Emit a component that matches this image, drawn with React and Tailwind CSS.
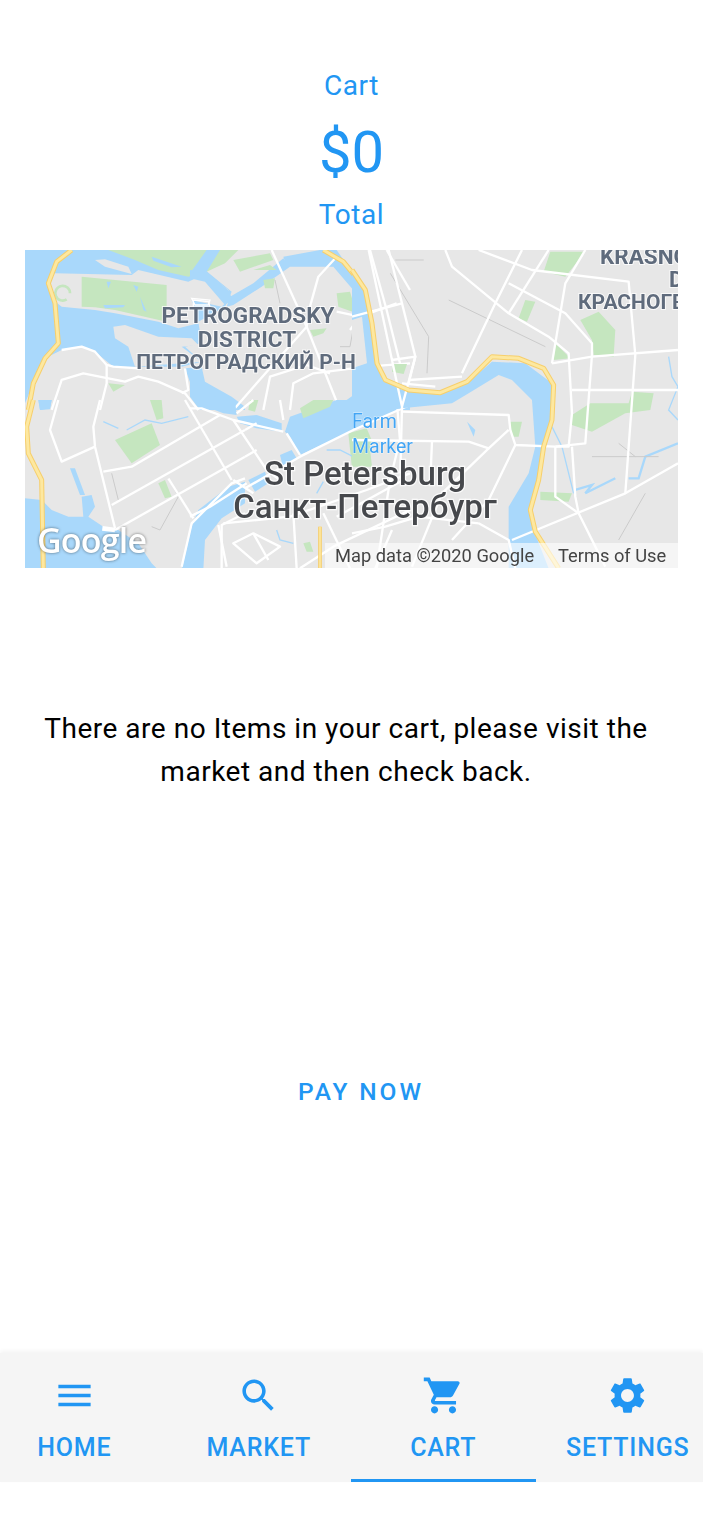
const BLUE = "#2196f3";
const WATER = "#a9d8fb";
const GREEN = "#c5e6bf";
const LAND = "#e7e7e7";

const tabs = [
  {
    label: "HOME",
    icon: "M3 18h18v-2H3v2zm0-5h18v-2H3v2zm0-7v2h18V6H3z",
  },
  {
    label: "MARKET",
    icon: "M15.5 14h-.79l-.28-.27C15.41 12.59 16 11.11 16 9.5 16 5.91 13.09 3 9.5 3S3 5.91 3 9.5 5.91 16 9.5 16c1.61 0 3.09-.59 4.23-1.57l.27.28v.79l5 4.99L20.49 19l-4.99-5zm-6 0C7.01 14 5 11.99 5 9.5S7.01 5 9.5 5 14 7.01 14 9.5 11.99 14 9.5 14z",
  },
  {
    label: "CART",
    active: true,
    icon: "M7 18c-1.1 0-1.99.9-1.99 2S5.9 22 7 22s2-.9 2-2-.9-2-2-2zM1 2v2h2l3.6 7.59-1.35 2.45c-.16.28-.25.61-.25.96 0 1.1.9 2 2 2h12v-2H7.42c-.14 0-.25-.11-.25-.25l.03-.12.9-1.63h7.45c.75 0 1.41-.41 1.75-1.03l3.58-6.49c.08-.14.12-.31.12-.48 0-.55-.45-1-1-1H5.21l-.94-2H1zm16 16c-1.1 0-1.99.9-1.99 2s.89 2 1.99 2 2-.9 2-2-.9-2-2-2z",
  },
  {
    label: "SETTINGS",
    icon: "M19.14 12.94c.04-.3.06-.61.06-.94 0-.32-.02-.64-.07-.94l2.03-1.58c.18-.14.23-.41.12-.61l-1.92-3.32c-.12-.22-.37-.29-.59-.22l-2.39.96c-.5-.38-1.03-.7-1.62-.94l-.36-2.54c-.04-.24-.24-.41-.48-.41h-3.84c-.24 0-.43.17-.47.41l-.36 2.54c-.59.24-1.13.57-1.62.94l-2.39-.96c-.22-.08-.47 0-.59.22L2.74 8.87c-.12.21-.08.47.12.61l2.03 1.58c-.05.3-.09.63-.09.94s.02.64.07.94l-2.03 1.58c-.18.14-.23.41-.12.61l1.92 3.32c.12.22.37.29.59.22l2.39-.96c.5.38 1.03.7 1.62.94l.36 2.54c.05.24.24.41.48.41h3.84c.24 0 .44-.17.47-.41l.36-2.54c.59-.24 1.13-.56 1.62-.94l2.39.96c.22.08.47 0 .59-.22l1.92-3.32c.12-.22.07-.47-.12-.61l-2.01-1.58zM12 15.6c-1.98 0-3.6-1.62-3.6-3.6s1.62-3.6 3.6-3.6 3.6 1.62 3.6 3.6-1.62 3.6-3.6 3.6z",
  },
];

// each map quadrant is traced in its own 3x coordinates
const northWestRoads = [
  "M110,300 L170,290 L210,305 L245,345 L265,350 L340,355",
  "M245,345 L245,400 L225,480",
  "M80,480 L110,390 L175,370 L250,385 L300,395 L340,380 L400,395 L480,430 L520,480",
  "M480,355 L490,420 L470,430",
];

const northRoads = [
  "M245,0 L350,230 L450,480",
  "M440,20 L385,80 L360,170 L350,230",
  "M350,230 L200,400 L130,480",
  "M220,480 L240,380 L350,345 L420,370",
  "M300,480 L310,400 L370,370 L530,350",
  "M440,185 L510,200 L620,160",
  "M540,0 L590,180 L630,340",
  "M590,0 L660,120",
  "M530,350 L660,340",
  "M480,240 L510,200",
];

const centerRoads = [
  "M0,25 L35,25 L130,60 L280,95",
  "M130,240 L190,280",
  "M130,60 L230,210 L270,240",
  "M165,90 L200,70",
  "M165,170 L200,150",
  "M165,265 L330,170 L490,90 L660,15",
  "M140,40 L190,0",
  "M290,100 L330,165",
  "M280,60 L270,0",
  "M0,350 L60,320 L170,250",
  "M130,430 L190,400 L270,440 L200,490 Z",
  "M190,400 L235,480",
  "M100,370 L300,350 L530,270 L660,220",
  "M85,375 L110,500",
  "M310,340 L320,505",
  "M400,340 L480,505",
  "M620,0 L630,120 L600,240 L560,505",
  "M440,350 L640,240",
  "M330,505 L430,440 L660,330",
];

const southWestRoads = [
  "M100,0 L75,90 L110,185 L210,140",
  "M225,0 L205,80 L210,140 L270,385",
  "M235,215 L320,200 L525,80 L585,45",
  "M260,315 L660,90",
  "M270,390 L660,170",
  "M480,0 L620,240",
  "M430,235 L505,355",
  "M470,500 L500,370 L620,250 L660,235",
  "M590,505 L590,375 L660,340",
];

const eastRoads = [
  "M50,30 L120,360 L150,500 L145,700 M0,230 L150,190 M120,360 L190,350 L150,500",
  "M110,30 L190,350 L170,430",
  "M280,30 L300,80 L470,220 L590,290 L650,340 L660,520 L650,620 L610,620",
  "M380,30 L540,90 L830,125 L850,345 L820,760",
  "M510,30 L430,190 L330,400",
  "M590,30 L470,220",
  "M700,30 L640,130 L600,370",
  "M470,130 L640,220 L720,310 L720,345 L700,610 L610,620",
  "M600,370 L720,350 L978,330",
  "M660,450 L978,450",
  "M150,515 L470,525 L475,570 L490,615 L610,620",
  "M0,600 L350,605 L410,625 L470,570",
  "M240,605 L235,720 M490,615 L410,780 L300,900",
  "M410,625 L270,760 L180,980",
  "M480,900 L820,760 L960,680 L978,670",
  "M610,620 L610,770 L680,820 L760,980",
  "M660,620 L670,770 L680,820",
  "M380,850 L470,900 L490,985 M70,985 L120,870 M0,880 L100,860 L200,830 L380,850",
  "M150,430 L250,440",
  "M330,410 L170,420",
];

const Roads = ({ items }) => (
  <g fill="none" stroke="#ffffff" strokeWidth="7" strokeLinejoin="round">
    {items.map((d) => (
      <path key={d} d={d} />
    ))}
  </g>
);

const Highway = ({ d, width = 15 }) => (
  <g fill="none" strokeLinejoin="round">
    <path d={d} stroke="#f7cf6b" strokeWidth={width} />
    <path d={d} stroke="#fde8a0" strokeWidth={width - 6} />
  </g>
);

const MapView = () => (
  <svg
    viewBox="25 250 653 318"
    className="block h-[318px] w-[653px] blur-[0.35px]"
    fontFamily="Roboto, sans-serif"
  >
    <rect x="25" y="250" width="653" height="318" fill={LAND} />

    <g transform="translate(25 250) scale(0.3333)">
      <path
        d="M0,0 H560 L540,60 L620,125 L600,170 L520,215 L530,280 L480,290 L530,335 L470,350 L265,350 L210,305 L170,290 L110,300 L60,325 L25,400 L0,460 Z"
        fill={WATER}
      />
      <path d="M250,0 H545 L520,70 L490,80 L400,60 L330,30 Z" fill={GREEN} />
      <path d="M380,20 L470,50 L440,52 L385,32 Z" fill={WATER} />
      <path d="M545,0 H640 L600,40 L545,65 Z" fill={GREEN} />
      <path d="M210,30 L240,28 L310,50 L320,72 L240,50 Z" fill={LAND} />
      <path
        d="M90,70 L320,75 L340,60 L490,95 L545,70 L610,120 L620,140 L590,170 L500,150 L505,165 L520,220 L460,235 L400,215 L270,190 L210,180 L110,170 L85,150 L65,100 Z"
        fill={LAND}
      />
      <path d="M170,80 L425,105 L425,215 L270,180 L210,172 L170,170 Z" fill={GREEN} />
      <path d="M245,95 L258,95 L250,115 Z M325,105 L340,110 L335,125 Z M235,165 L300,165 L295,172 L240,175 Z M345,140 L365,185 L355,180 Z" fill={WATER} />
      <path d="M135,130 A22,22 0 1,0 125,148" fill="none" stroke={GREEN} strokeWidth="8" />
      <path d="M265,230 L300,225 L400,260 L500,265 L520,285 L470,290 L530,335 L330,350 L310,290 L270,265 Z" fill={LAND} />
      <path d="M480,355 L530,350 L540,395 L620,440 L660,470 V480 L540,480 L500,410 Z" fill={WATER} />
      <path d="M250,400 L300,405 L265,425 Z" fill={GREEN} />
      <path d="M500,145 L555,150 L550,165 L510,165 Z" fill="none" stroke="#ffffff" strokeWidth="4" />
      <Roads items={northWestRoads} />
      <path d="M40,450 H80 L75,478 L45,480 Z" fill={WATER} />
      <Highway d="M140,0 L95,35 L70,100 L90,160 L100,280 L60,325 L25,400 L10,480" />
    </g>

    <g transform="translate(190 250) scale(0.3333)">
      <path d="M120,140 L190,100 L280,25 L300,50 L215,110 L130,165 L110,170 Z" fill={WATER} />
      <path d="M0,60 L50,65 L120,125 L125,150 L105,165 L45,95 L0,85 Z" fill={WATER} />
      <path d="M50,0 L90,0 L50,65 L0,70 Z" fill={WATER} />
      <path d="M470,450 L540,400 L530,350 L510,200 L490,120 L430,50 L290,50 L280,20 L390,0 L440,0 L530,130 L560,340 L590,400 L660,430 V480 H460 Z" fill={WATER} />
      <path d="M0,390 L60,430 L130,480 H30 L0,440 Z" fill={WATER} />
      <path d="M130,30 L240,10 L250,30 L150,65 Z M220,90 L255,85 L250,115 L225,115 Z M440,130 L480,125 L500,190 L445,170 Z M360,240 L410,235 L400,250 L370,260 Z M190,60 L240,45 L260,60" fill={GREEN} />
      <path d="M255,90 L270,160 M450,290 L480,290 L490,235" fill="none" stroke="#cbcbcb" strokeWidth="3" />
      <Roads items={northRoads} />
      <path d="M10,150 L55,155 L60,170 M10,150 V170" fill="none" stroke="#ffffff" strokeWidth="4" />
      <Highway d="M400,0 L460,35 L505,90" />
    </g>

    <g transform="translate(25 400) scale(0.3333)">
      <path d="M0,295 L50,300 L80,330 L130,350 L175,350 L170,290 L200,285 L210,320 L190,350 L235,380 L280,390 L340,430 L380,490 L400,510 H0 Z" fill={WATER} />
      <path d="M135,205 L150,205 L180,285 L165,285 Z" fill={WATER} />
      <path d="M660,245 L610,260 L520,330 L500,380 L470,510 H535 L540,420 L590,355 L660,310 Z" fill={WATER} />
      <path d="M40,0 H80 L75,25 L45,30 Z" fill={WATER} />
      <path d="M235,65 L280,85 M305,90 L360,60 L410,70 L490,50" fill="none" stroke={WATER} strokeWidth="4" />
      <path d="M270,120 L380,70 L405,135 L320,190 Z" fill={GREEN} />
      <path d="M375,0 H410 L415,55 L395,60 Z" fill={GREEN} />
      <path d="M400,250 L420,240 L440,290 L420,295 Z" fill={GREEN} />
      <path d="M260,220 L280,300 M430,235 L460,290 L405,390 L380,380" fill="none" stroke="#cbcbcb" strokeWidth="3" />
      <Roads items={southWestRoads} />
      <path d="M232,385 L270,390" stroke="#ffffff" strokeWidth="14" />
      <Highway d="M25,0 L5,80 L10,160 L50,240 L55,510" />
    </g>

    <g transform="translate(190 400) scale(0.3333)">
      <path d="M30,0 H135 L140,45 L100,40 L60,25 Z" fill={WATER} />
      <path d="M140,50 L200,45 L275,70 L275,95 L200,85 L150,70 Z" fill={WATER} />
      <path d="M285,95 L300,50 L440,0 H660 V15 L490,90 L330,165 L300,110 Z" fill={WATER} />
      <path d="M270,165 L305,150 L320,175 L280,205 Z" fill={WATER} />
      <path d="M175,240 L225,215 L235,250 L195,275 Z" fill={WATER} />
      <path d="M330,25 L370,0 H430 L420,20 L340,55 Z" fill={GREEN} />
      <path d="M475,100 L530,85 L545,120 L530,190 L485,195 Z" fill={GREEN} />
      <path d="M180,0 H205 L195,35 L175,30 Z" fill={GREEN} />
      <path d="M340,430 L360,425 L370,455 L350,455 Z" fill={GREEN} />
      <path d="M410,150 L450,150 L490,170 M260,390 L270,420 L310,430 M380,280 L400,245" fill="none" stroke={WATER} strokeWidth="4" />
      <Roads items={centerRoads} />
      <Highway d="M390,380 V510" width="11" />
    </g>

    <g transform="translate(352 240) scale(0.3333)">
      <path
        d="M0,90 L40,150 L60,300 L85,400 L150,450 L260,462 L350,425 L420,365 L520,370 L600,430 L600,540 L570,620 L550,760 L530,810 L545,870 L590,985 H470 L470,800 L530,700 L550,620 L540,480 L480,420 L440,405 L350,460 L300,490 L150,505 L0,530 Z"
        fill={WATER}
      />
      <path d="M0,240 L30,230 L45,370 L0,385 Z" fill={LAND} />
      <path d="M595,35 H700 L640,110 L575,95 Z" fill={GREEN} />
      <path d="M520,180 L550,185 L525,245 L500,235 Z" fill={GREEN} />
      <path d="M685,240 L740,215 L790,270 L785,350 L725,345 L720,300 Z" fill={GREEN} />
      <path d="M610,310 L655,355 L605,360 Z" fill={GREEN} />
      <path d="M660,525 L715,490 L830,490 L840,455 L905,460 L895,510 L820,520 L720,575 L660,555 Z" fill={GREEN} />
      <path d="M475,545 L510,545 L500,590 L480,590 Z" fill={GREEN} />
      <path d="M125,372 L165,372 L155,402 L120,395 Z" fill={GREEN} />
      <path d="M565,755 L660,760 L650,785 L565,780 Z" fill={GREEN} />
      <path d="M0,590 H50 L60,680 L0,680 Z" fill={GREEN} />
      <path d="M345,545 L365,590 L370,570 Z" fill={WATER} />
      <path d="M670,750 L720,735 L700,760 L790,715 M830,715 L860,715 L880,650 L978,610" fill="none" stroke={WATER} strokeWidth="7" />
      <path d="M950,350 L960,410 L978,440 L950,510 L978,540" fill="none" stroke={WATER} strokeWidth="4" />
      <path d="M590,540 L630,620 L665,760" fill="none" stroke={WATER} strokeWidth="4" />
      <path d="M130,60 H215 M115,100 L230,290 L225,400 M290,180 L580,320 M720,650 L920,650 M800,610 L850,650 M880,760 L800,900" fill="none" stroke="#cbcbcb" strokeWidth="3" />
      <Roads items={eastRoads} />
      <Highway d="M0,90 L40,150 L60,250 L75,370 L100,420 L170,450 L265,458 L345,425 L420,350 L500,355 L575,385 L605,435 L600,540 L575,620 L560,720 L535,810 L550,875 L620,985" />
    </g>

    <g fontWeight="700" fill="#5f6b7c" stroke="#ffffff" strokeWidth="2" paintOrder="stroke" strokeOpacity="0.75">
      <text x="248" y="323" fontSize="22.5" textAnchor="middle">PETROGRADSKY</text>
      <text x="247" y="347" fontSize="22.5" textAnchor="middle">DISTRICT</text>
      <text x="246" y="369" fontSize="21" textAnchor="middle">ПЕТРОГРАДСКИЙ Р-Н</text>
      <text x="600" y="264" fontSize="22.5">KRASNOGVARDEYSKY</text>
      <text x="669" y="287" fontSize="22.5">D</text>
      <text x="578" y="309" fontSize="21">КРАСНОГВАРДЕЙСКИЙ</text>
    </g>
    <g fill="#42a5f5" fontSize="19.5" stroke="#ffffff" strokeWidth="1" paintOrder="stroke" strokeOpacity="0.6">
      <text x="352" y="428">Farm</text>
      <text x="352" y="453">Marker</text>
    </g>
    <g fill="#46484c" fontWeight="500" stroke="#ffffff" strokeWidth="2.5" paintOrder="stroke" strokeOpacity="0.8" textAnchor="middle">
      <text x="365" y="485" fontSize="33">St Petersburg</text>
      <text x="365" y="518" fontSize="33">Санкт-Петербург</text>
    </g>
    <text
      x="37"
      y="553"
      fontSize="34"
      fontWeight="600"
      fill="#ffffff"
      textLength="110"
      fontFamily="'Open Sans', sans-serif"
      className="[filter:drop-shadow(0_0_1.5px_rgba(0,0,0,0.5))]"
    >
      Google
    </text>

    <rect x="325" y="543" width="353" height="25" fill="#ffffff" fillOpacity="0.6" />
    <g fontSize="18.3" fill="#444444">
      <text x="335" y="562">Map data ©2020 Google</text>
      <text x="558" y="562">Terms of Use</text>
    </g>
  </svg>
);

const App = () => {
  return (
    <div className="h-[1520px] overflow-hidden bg-white font-['Roboto',sans-serif]">
      <div className="flex h-[250px] flex-col items-center pt-[67px] text-[#2196f3]">
        <p className="h-[38px] text-[28px] leading-[38px] tracking-[0.6px]">Cart</p>
        <p className="h-[94px] text-[58px] leading-[94px]">$0</p>
        <p className="text-[28px] leading-[32px] tracking-[0.6px]">Total</p>
      </div>

      <div className="ml-[25px]">
        <MapView />
      </div>

      <p className="mt-[139px] ml-[25px] w-[642px] text-center text-[28px] leading-[43px] tracking-[0.52px] text-black">
        There are no Items in your cart, please visit the market and then check back.
      </p>

      <button className="mt-[283px] ml-[298px] block text-[24.5px] leading-[32px] font-medium tracking-[2.9px] text-[#2196f3]">
        PAY NOW
      </button>

      <div className="mt-[245px] overflow-hidden shadow-[0_-2px_4px_rgba(0,0,0,0.05)]">
        <div className="-ml-[18px] flex h-[129px] w-[738px] bg-[#f5f5f5]">
          {tabs.map((tab) => (
            <div
              key={tab.label}
              className={`flex flex-1 flex-col items-center pt-[21px] ${
                tab.active ? "border-b-[3px] border-[#2196f3]" : ""
              }`}
            >
              <svg viewBox="0 0 24 24" className="h-[43px] w-[43px]" fill={BLUE}>
                <path d={tab.icon} />
              </svg>
              <span className="mt-[15px] text-[25px] leading-[32px] font-medium tracking-[0.8px] text-[#2196f3]">
                {tab.label}
              </span>
            </div>
          ))}
        </div>
      </div>
    </div>
  );
};

export default App;
